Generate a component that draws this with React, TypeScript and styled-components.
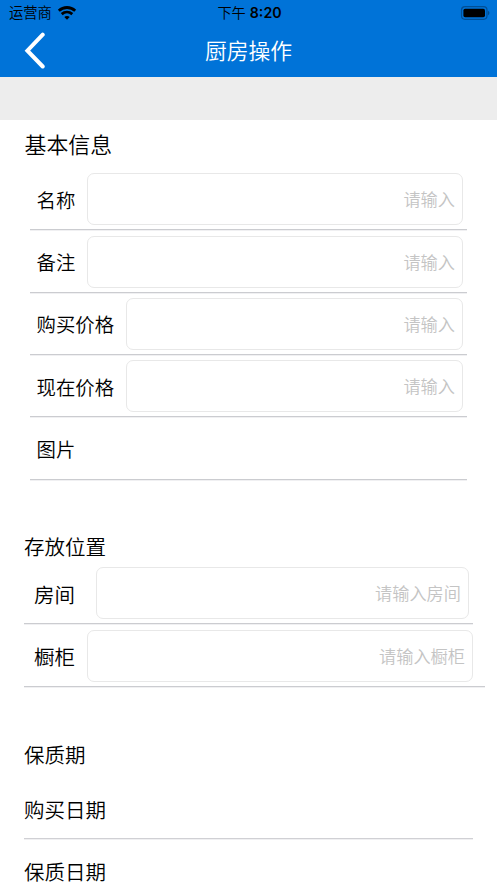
import React from 'react';
import styled, { createGlobalStyle } from 'styled-components';

const GlobalStyle = createGlobalStyle`
  * { box-sizing: border-box; }
  body { margin: 0; background: #fff; overflow: hidden; }
`;

const Screen = styled.div`
  width: 497px;
  height: 883px;
  overflow: hidden;
  background: #fff;
  color: #000;
  font-family: Inter, 'Noto Sans CJK SC DemiLight', 'Noto Sans CJK SC', sans-serif;
  font-weight: 350;
`;

const Header = styled.header`
  height: 77px;
  background: #0073d8;
`;

const StatusBar = styled.div`
  display: grid;
  grid-template-columns: 1fr auto 1fr;
  align-items: center;
  height: 26px;
  padding: 0 7px 0 9px;
  color: #000;
  font-size: 14.3px;
  line-height: 26px;
`;

const Carrier = styled.div`
  display: flex;
  align-items: center;
  gap: 5px;

  svg { margin-top: -1px; }
`;

const Clock = styled.div`
  font-size: 14.2px;
  font-weight: 600;
`;

const Meridiem = styled.span`
  font-weight: 400;
  margin-right: 4px;
`;

const BatteryIcon = styled.svg`
  justify-self: end;
  margin-top: -1px;
`;

const NavBar = styled.div`
  display: grid;
  grid-template-columns: 60px 1fr 60px;
  align-items: center;
  height: 51px;
`;

const BackButton = styled.button`
  display: flex;
  width: 60px;
  height: 51px;
  padding: 6px 0 0 24px;
  border: 0;
  background: none;
`;

const Title = styled.h1`
  margin: 0;
  color: #fff;
  font-size: 21.8px;
  font-weight: 350;
  line-height: 48px;
  height: 50px;
  text-align: center;
`;

const Gap = styled.div`
  height: 43px;
  background: #ededed;
`;

const Section = styled.section<{ $height: number; $left: number }>`
  height: ${p => p.$height}px;
  padding-left: ${p => p.$left}px;
`;

const Heading = styled.h2<{ $height: number; $line: number; $indent?: number; $size?: number }>`
  height: ${p => p.$height}px;
  margin: 0 0 0 ${p => p.$indent ?? 0}px;
  font-size: ${p => p.$size ?? 20.5}px;
  font-weight: 350;
  line-height: ${p => p.$line}px;
`;

const Row = styled.label<{ $width: number; $indent: number; $size?: number }>`
  display: flex;
  align-items: center;
  width: ${p => p.$width}px;
  height: 62.35px;
  padding: 1px 0 0 ${p => p.$indent}px;
  border-bottom: 1px solid #cbccd0;
  box-shadow: 0 1px 0 #f0f0f2;
  font-size: ${p => p.$size ?? 19.4}px;
  line-height: 28px;
`;

const Label = styled.span<{ $width: number; $top?: number }>`
  flex: none;
  width: ${p => p.$width}px;
  padding-top: ${p => p.$top ?? 3}px;
`;

const Field = styled.input<{ $end: number }>`
  flex: 1;
  min-width: 0;
  height: 52px;
  margin-right: ${p => p.$end}px;
  padding: 1px 7px 0 8px;
  border: 1px solid #e8e8e8;
  border-radius: 7px;
  outline: 0;
  background: #fff;
  font: inherit;
  font-size: 17.2px;
  text-align: right;
  &::placeholder { color: #c4c4c4; opacity: 1; }
`;

const DateRow = styled.div<{ $height: number; $top: number }>`
  width: 449px;
  height: ${p => p.$height}px;
  padding-top: ${p => p.$top}px;
  border-bottom: 1px solid #d0d0d4;
  box-shadow: 0 1px 0 #f0f0f2;
  font-size: 20.5px;
  line-height: 20px;
`;

const basics = [
  { label: '名称', width: 50.5, hint: '请输入' },
  { label: '备注', width: 50.5, hint: '请输入' },
  { label: '购买价格', width: 89.5, hint: '请输入' },
  { label: '现在价格', width: 89.5, hint: '请输入' },
  { label: '图片', width: 50.5, hint: '' },
];

export default function App() {
  return (
    <>
      <GlobalStyle />
      <Screen>
        <Header>
          <StatusBar>
            <Carrier>
              运营商
              <svg width="20" height="14" viewBox="0 0 20 14" fill="none" stroke="#000" strokeWidth="2.8">
                <path d="M1.8 4.7C6.5.4 13.5.4 18.2 4.7" />
                <path d="M4.7 8.1C7.8 5.4 12.2 5.4 15.3 8.1" />
                <path d="M7.3 11C8.8 9.6 11.2 9.6 12.7 11L10 13.7Z" fill="#000" stroke="none" />
              </svg>
            </Carrier>
            <Clock><Meridiem>下午</Meridiem>8:20</Clock>
            <BatteryIcon width="30" height="14" viewBox="0 0 30 14">
              <rect x="1.5" y=".7" width="25.5" height="12.6" rx="3.5" fill="none" stroke="#004f96" strokeWidth="1.2" />
              <rect x="3.4" y="2.7" width="21.6" height="8.6" rx="1.7" />
              <path d="M28.2 4.8C29.8 5.5 29.8 8.5 28.2 9.2Z" fill="#004580" />
            </BatteryIcon>
          </StatusBar>
          <NavBar>
            <BackButton aria-label="返回">
              <svg width="22" height="37" viewBox="0 0 22 37" fill="none" stroke="#fff" strokeWidth="4" strokeLinecap="round" strokeLinejoin="miter">
                <path d="M18.7 2.7L3.4 18.7L18.7 34.5" />
              </svg>
            </BackButton>
            <Title>厨房操作</Title>
          </NavBar>
        </Header>
        <Gap />
        <Section $height={401} $left={30}>
          <Heading $height={48} $line={50} $indent={-5.5} $size={21.9}>基本信息</Heading>
          {basics.map(item => (
            <Row key={item.label} $width={437} $indent={6.5}>
              <Label $width={item.width}>{item.label}</Label>
              {item.hint && <Field $end={4} placeholder={item.hint} />}
            </Row>
          ))}
        </Section>
        <Section $height={208} $left={24}>
          <Heading $height={41} $line={53}>存放位置</Heading>
          <Row $width={449} $indent={10} $size={20.5}>
            <Label $width={62} $top={5}>房间</Label>
            <Field $end={4} placeholder="请输入房间" />
          </Row>
          <Row $width={461} $indent={10} $size={20.5}>
            <Label $width={53} $top={5}>橱柜</Label>
            <Field $end={12} placeholder="请输入橱柜" />
          </Row>
        </Section>
        <Section $height={154} $left={24}>
          <Heading $height={50} $line={54}>保质期</Heading>
          <DateRow $height={60} $top={22}>购买日期</DateRow>
          <DateRow $height={62} $top={24}>保质日期</DateRow>
        </Section>
      </Screen>
    </>
  );
}
